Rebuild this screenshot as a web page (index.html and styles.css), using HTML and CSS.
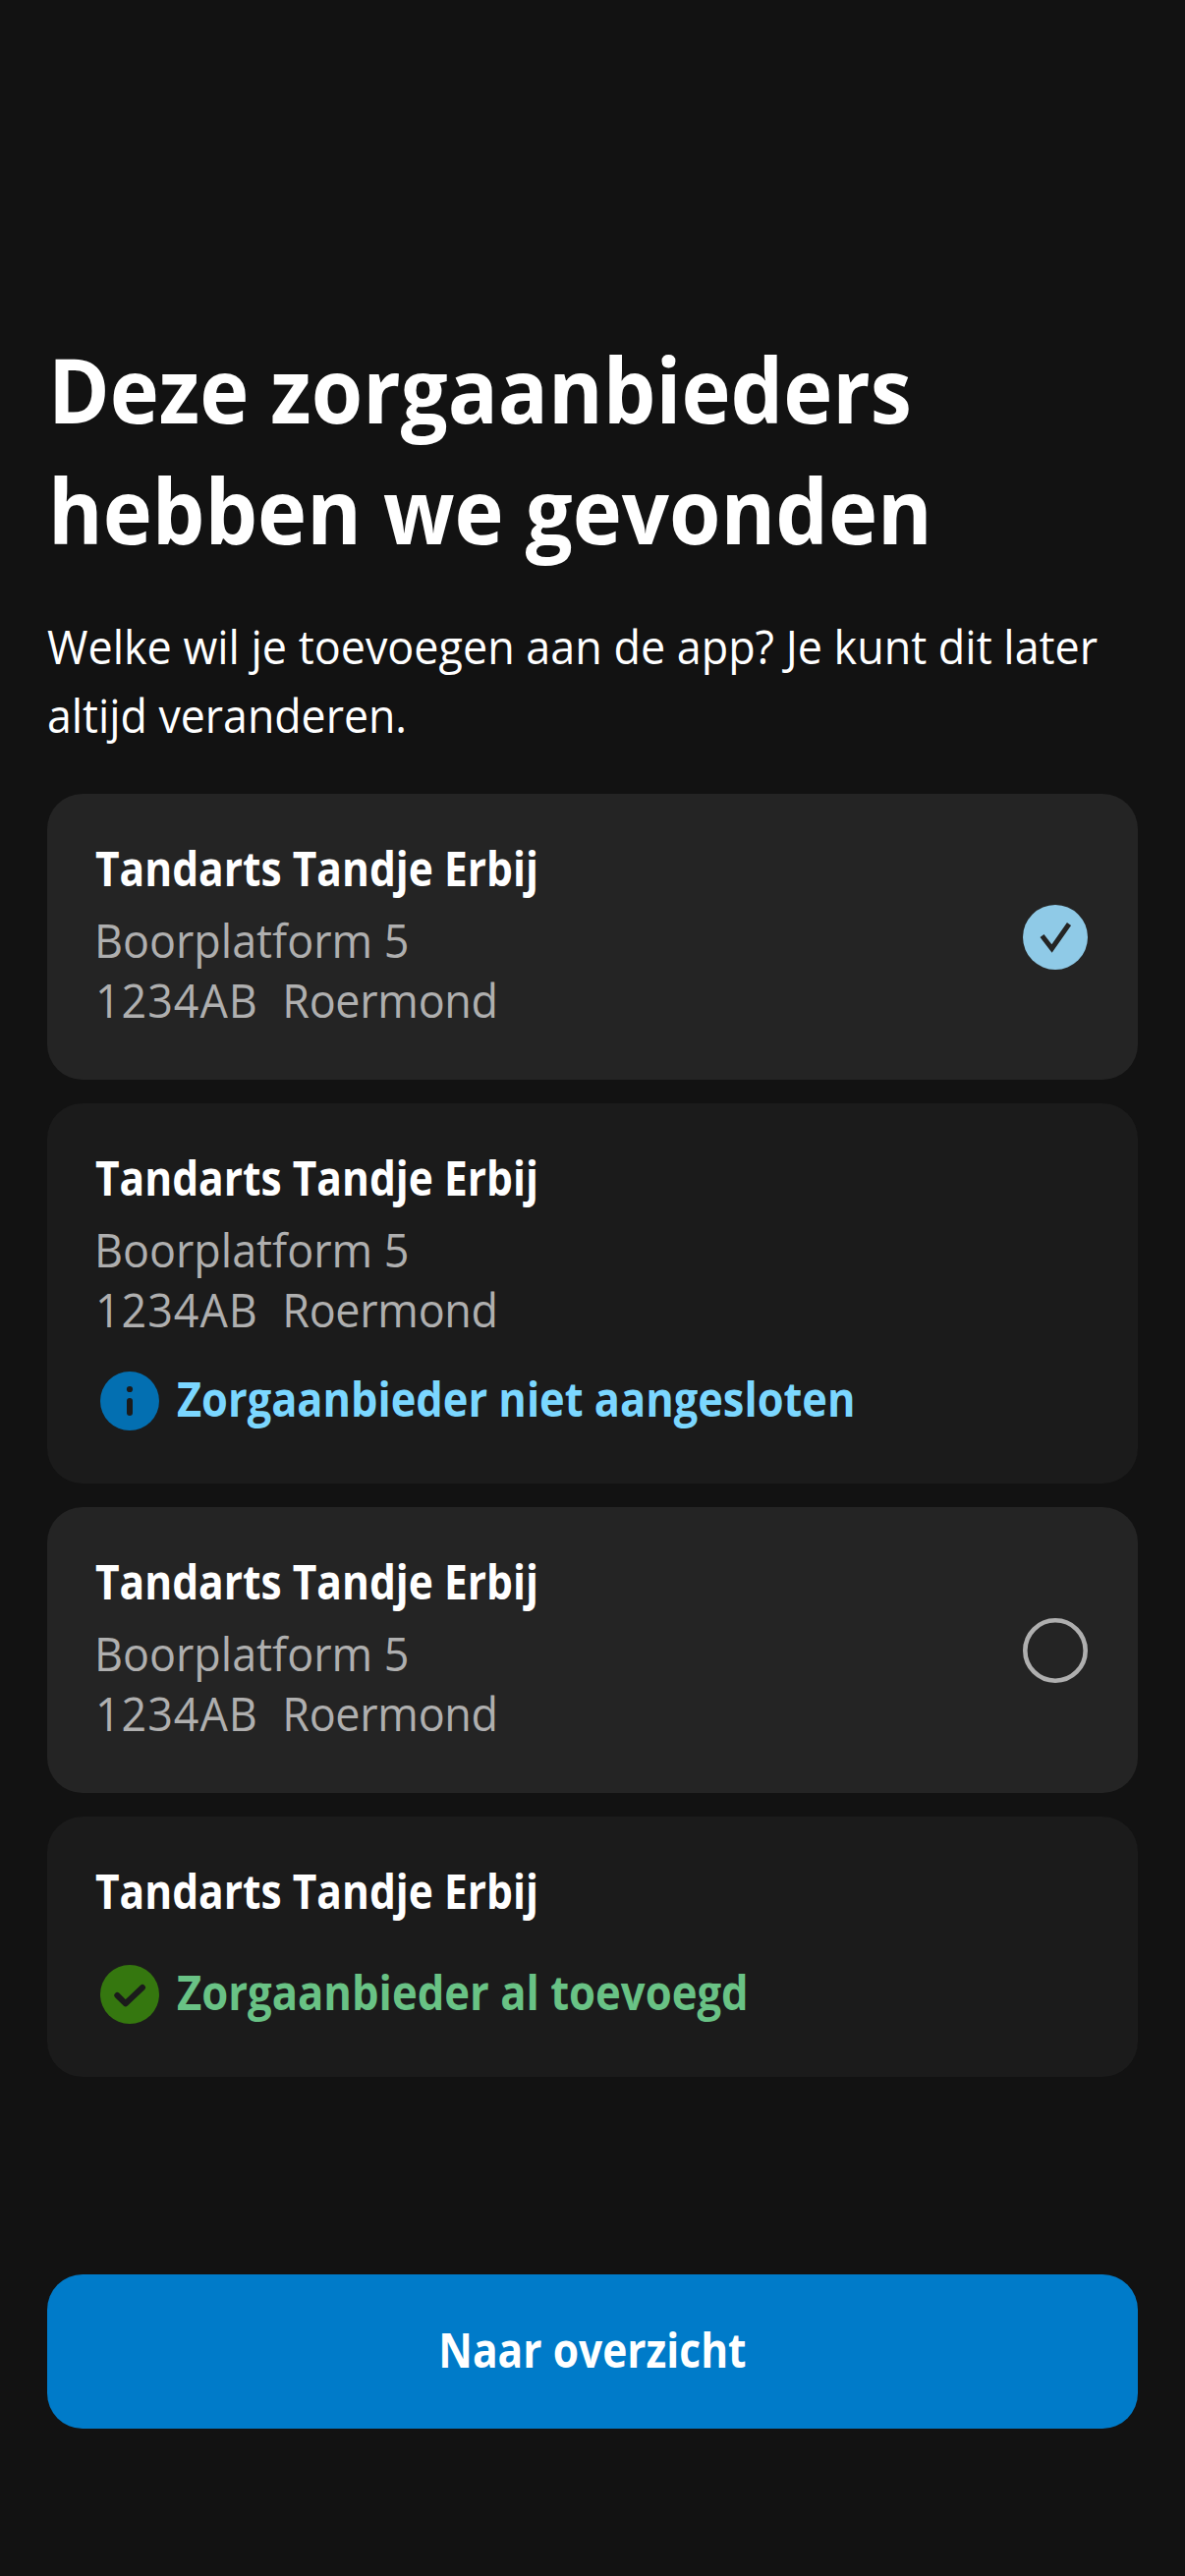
FILE: index.html
```html
<!DOCTYPE html>
<html lang="nl">
<head>
<meta charset="utf-8">
<title>Zorgaanbieders</title>
<link rel="stylesheet" href="styles.css">
</head>
<body>
<main class="screen">
  <h1 class="heading"><span class="narrow">Deze zorgaanbieders</span><span class="narrow">hebben we gevonden</span></h1>
  <p class="intro"><span class="narrow">Welke wil je toevoegen aan de app? Je kunt dit later</span><span class="narrow second">altijd veranderen.</span></p>
  <div class="list">
    <section class="card selectable">
      <div class="details">
        <h2 class="name narrow">Tandarts Tandje Erbij</h2>
        <p class="address narrow">Boorplatform 5</p>
        <p class="address place narrow"><span class="postcode">1234AB</span><span class="city">Roermond</span></p>
      </div>
      <svg class="radio" viewBox="0 0 66 66"><circle cx="33" cy="33" r="33" fill="#8fcae7"/><path d="M19.500 31.500l10 13L47 19.500" fill="none" stroke="#242424" stroke-width="5"/></svg>
    </section>
    <section class="card disabled">
      <h2 class="name narrow">Tandarts Tandje Erbij</h2>
      <p class="address narrow">Boorplatform 5</p>
      <p class="address place narrow"><span class="postcode">1234AB</span><span class="city">Roermond</span></p>
      <div class="status info">
        <svg class="icon" viewBox="0 0 60 60"><circle cx="30" cy="30" r="30" fill="#036fb1"/><circle cx="30" cy="18" r="3.100" fill="#1b1b1b"/><path d="M30 30v12" stroke="#1b1b1b" stroke-width="6" stroke-linecap="round"/></svg>
        <span class="narrow">Zorgaanbieder niet aangesloten</span>
      </div>
    </section>
    <section class="card selectable">
      <div class="details">
        <h2 class="name narrow">Tandarts Tandje Erbij</h2>
        <p class="address narrow">Boorplatform 5</p>
        <p class="address place narrow"><span class="postcode">1234AB</span><span class="city">Roermond</span></p>
      </div>
      <svg class="radio" viewBox="0 0 66 66"><circle cx="33" cy="33" r="30.700" fill="none" stroke="#afafaf" stroke-width="4.600"/></svg>
    </section>
    <section class="card disabled">
      <h2 class="name narrow">Tandarts Tandje Erbij</h2>
      <div class="status added">
        <svg class="icon" viewBox="0 0 60 60"><circle cx="30" cy="30" r="30" fill="#35770f"/><path d="M17.300 31l8.500 8.300L43 23" fill="none" stroke="#1b1b1b" stroke-width="6" stroke-linecap="round" stroke-linejoin="round"/></svg>
        <span class="narrow">Zorgaanbieder al toevoegd</span>
      </div>
    </section>
  </div>
  <button class="primary" type="button"><span class="narrow">Naar overzicht</span></button>
</main>
</body>
</html>
```
FILE: styles.css
```css
* { box-sizing: border-box; margin: 0; padding: 0; }

body {
  background: #121212;
  color: #fff;
  font-family: "Open Sans", "Noto Sans", sans-serif;
  font-size: 47.5px;
}

.screen {
  display: flex;
  flex-direction: column;
  width: 1206px;
  min-height: 2622px;
  padding: 335px 48px 0;
}

/* The typeface is set slightly narrower than its natural width. */
.narrow {
  display: block;
  width: max-content;
  white-space: nowrap;
  transform: scaleX(.945);
  transform-origin: left center;
}

.heading { font-size: 91px; line-height: 123px; font-weight: 700; }
.heading .narrow { padding-left: 1px; transform: scaleX(.932); }

.intro { margin-top: 42px; line-height: 70px; }
.intro .second { transform: scaleX(.94); }

.list { display: flex; flex-direction: column; gap: 24px; margin-top: 45px; }

.card { padding: 46px 48px 0; border-radius: 36px; background: #1b1b1b; }
.disabled { padding-bottom: 54px; }
.selectable {
  display: flex;
  justify-content: space-between;
  height: 291px;
  background: #242424;
}

.name { font-size: 47.5px; line-height: 60px; font-weight: 700; margin-bottom: 12px; }
.name.narrow { padding-left: 1px; transform: scaleX(.895); }
.address { line-height: 61px; color: #afafaf; }
.place { display: flex; gap: 26px; padding-left: 1px; }
.postcode { letter-spacing: 1px; }
.city { letter-spacing: -.3px; }

.radio { width: 66px; height: 66px; margin: 67px 3px 0 0; }

.status {
  display: flex;
  gap: 18px;
  height: 60px;
  margin: 33px 0 0 6px;
  line-height: 55px;
  font-weight: 700;
}
.status .narrow { transform: scaleX(.913); }
.icon { width: 60px; height: 60px; }
.info { color: #7bd7ff; }
.added { color: #69c285; }
.added .narrow { transform: scaleX(.918); }
.name + .status { margin-top: 45px; }
.name:has(+ .status) { margin-bottom: 0; }

.primary {
  display: flex;
  align-items: center;
  justify-content: center;
  height: 157px;
  margin-top: 201px;
  padding-bottom: 5px;
  border: 0;
  border-radius: 36px;
  background: #007bc9;
  color: #fff;
  font: 700 47.5px "Open Sans", "Noto Sans", sans-serif;
}
.primary .narrow { transform: scaleX(.895); transform-origin: center; }
```
